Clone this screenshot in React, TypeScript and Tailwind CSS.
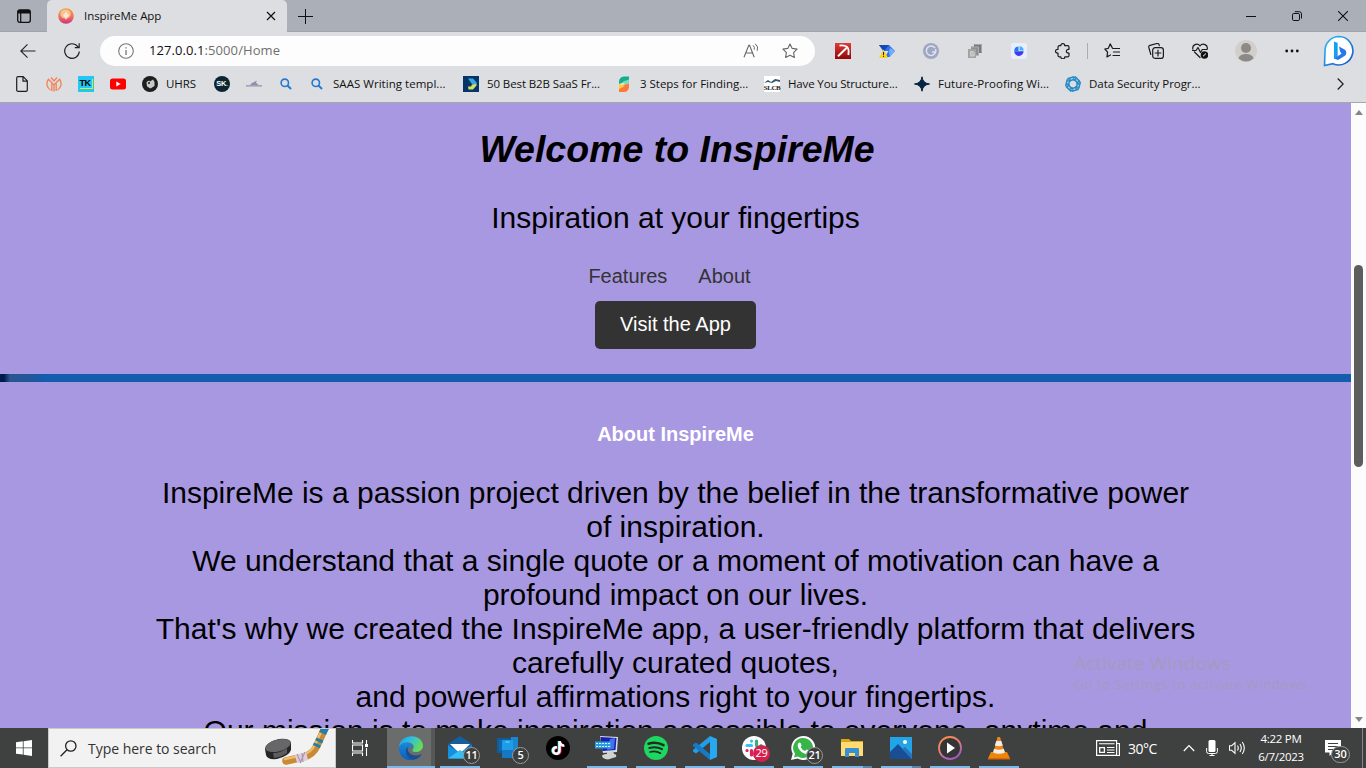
import React from "react";
import { FaTiktok } from "react-icons/fa6";

const UI = "font-['Open_Sans','Noto_Sans',sans-serif]";

function Svg({ w = 16, h, box, children }: { w?: number; h?: number; box?: string; children: React.ReactNode }) {
  const hh = h ?? w;
  return (
    <svg width={w} height={hh} viewBox={box ?? `0 0 ${w} ${hh}`} fill="none" className="block shrink-0">
      {children}
    </svg>
  );
}

const line = { stroke: "#1b1b1b", strokeWidth: 1.2, strokeLinecap: "round" as const, strokeLinejoin: "round" as const };

function TitleBar() {
  return (
    <div className="flex h-8 bg-[#abafb7] shadow-[inset_0_-1px_0_#a0a3ac]">
      <div className="flex w-[47px] items-center justify-center">
        <Svg w={14}>
          <rect x=".7" y=".9" width="12.6" height="12.4" rx="2" stroke="#111" strokeWidth="1.3" />
          <path d="M1 1h12v3.5H1z" fill="#111" />
          <path d="M3.7 4v9" stroke="#111" strokeWidth="1.2" />
        </Svg>
      </div>
      <div className="flex w-60 items-center rounded-t-[5px] bg-[#dddee2] pl-[11px]">
        <Svg>
          <defs>
            <linearGradient id="fav" x1="0" y1="0" x2="0" y2="1">
              <stop offset="0" stopColor="#f3a13a" />
              <stop offset=".5" stopColor="#ef7a55" />
              <stop offset="1" stopColor="#cf2f80" />
            </linearGradient>
          </defs>
          <circle cx="8" cy="8" r="7.8" fill="url(#fav)" />
          <ellipse cx="7.5" cy="6" rx="5.2" ry="4.5" fill="#fbd3b0" opacity=".75" />
          <path d="M8 3.500l1.500 2.500 2 1-2 2-1.500 3-1.500-3-2-2 2-1z" fill="#fff0dc" opacity=".8" />
        </Svg>
        <span className="ml-[10px] w-[172px] text-[11.5px] tracking-[-0.05px] text-[#111]">InspireMe App</span>
        <span className="ml-2.5">
          <Svg w={10}>
            <path d="M1 1l8 8M9 1L1 9" stroke="#111" strokeWidth="1.2" />
          </Svg>
        </span>
      </div>
      <div className="flex w-9 items-center justify-center">
        <Svg w={15}>
          <path d="M7.500 0v15M0 7.500h15" stroke="#111" strokeWidth="1" />
        </Svg>
      </div>
      <div className="ml-auto flex items-center">
        <div className="flex w-[46px] justify-center">
          <Svg w={10}>
            <path d="M0 5.5h10" stroke="#111" />
          </Svg>
        </div>
        <div className="flex w-[46px] justify-center">
          <Svg w={10}>
            <rect x=".5" y="2.5" width="7" height="7" rx="1.3" stroke="#111" />
            <path d="M2.8.7H7.3a2.2 2.2 0 0 1 2.2 2.2v4.6" stroke="#111" />
          </Svg>
        </div>
        <div className="flex w-[46px] justify-center">
          <Svg w={10}>
            <path d="M0 0l10 10M10 0L0 10" stroke="#111" strokeWidth="1.1" />
          </Svg>
        </div>
      </div>
    </div>
  );
}

function Cell({ children }: { children: React.ReactNode }) {
  return <div className="flex w-11 shrink-0 items-center justify-center">{children}</div>;
}

const star = "M8 .9l2.2 4.5 4.9.7-3.5 3.5.8 4.9L8 12.2l-4.400 2.300.8-4.900L.9 6.100l4.900-.7z";

function Toolbar() {
  return (
    <div className="flex h-[38px] items-center">
      <div className="ml-1.5 flex">
        <Cell>
          <Svg>
            <path d="M15.5 8H.8M7.5 1.3L.8 8l6.7 6.7" stroke="#222" strokeWidth="1.1" />
          </Svg>
        </Cell>
        <Cell>
          <Svg>
            <path d="M15.300 8.500A7.300 7.300 0 1 1 13.800 3.600L15 4.700M15.200.3v4.400h-4.400" stroke="#222" strokeWidth="1.2" />
          </Svg>
        </Cell>
      </div>
      <div className="ml-1.5 flex h-[30px] w-[715px] items-center rounded-full bg-[#fdfdfd]">
        <div className="ml-[18px]">
          <Svg>
            <circle cx="8" cy="8" r="7.3" stroke="#777" strokeWidth="1.1" />
            <path d="M8 7v5M8 4.2v1.4" stroke="#777" strokeWidth="1.3" />
          </Svg>
        </div>
        <span className="ml-[15px] text-[13px] tracking-[0.08px] text-[#6f6f6f]">
          <span className="text-[#111]">127.0.0.1</span>:5000/Home
        </span>
        <div className="ml-auto flex items-center gap-[23px] pr-[17px]">
          <Svg>
            <path d="M1 14.2L5.8 2.2h.8l4.6 12M2.8 10h6.600" stroke="#666" strokeWidth="1.1" />
            <path d="M10 2.400q2 1.600 1.200 4.200M12.200.8q3.600 2.800 2 7" stroke="#666" />
          </Svg>
          <Svg>
            <path d={star} stroke="#666" strokeWidth="1.1" strokeLinejoin="round" />
          </Svg>
        </div>
      </div>
      <div className="ml-1.5 flex">
        <Cell>
          <Svg>
            <defs>
              <linearGradient id="red" x1="0" y1="0" x2="0" y2="1">
                <stop stopColor="#e03a38" />
                <stop offset="1" stopColor="#900707" />
              </linearGradient>
            </defs>
            <path d="M0 0h16v16H0z" fill="url(#red)" />
            <path d="M3 13.300L11.500 5" stroke="#fff" strokeWidth="1.900" />
            <path d="M4.500 2.600Q9.500 2 12 4t1.300 8" stroke="#fff" strokeWidth="1.800" />
          </Svg>
        </Cell>
        <Cell>
          <Svg>
            <path d="M0 2h10l6 6-5.500 6H6l3.500-6H4z" fill="#2c73ee" />
            <path d="M0 2h10L5 8z" fill="#1349b0" />
            <path d="M11 5l5 3-5 5.500-1-5z" fill="#79adf5" />
            <path d="M4.500 6.500L9 15H0z" fill="#ffd21c" />
            <path d="M4.500 9v3M4.500 12.800v1.200" stroke="#222" />
          </Svg>
        </Cell>
        <Cell>
          <Svg>
            <circle cx="8" cy="8" r="8" fill="#9ea6c2" />
            <path d="M12 5.200A4.700 4.700 0 1 0 12.600 9H9M12.700 6v3" stroke="#e1e3ec" strokeWidth="1.500" />
          </Svg>
        </Cell>
        <Cell>
          <Svg w={14}>
            <path d="M6 0h8v9H6z" fill="#7b7b7b" />
            <path d="M3 2.500h8v9H3z" fill="#8f8f8f" />
            <path d="M0 5h8v9H0z" fill="#a3a3a3" />
            <path d="M2.500 7.500h2.700l1 1v3.500H2.500z" fill="#bdbdbd" stroke="#cfcfcf" />
            <path d="M3 3h7.500v8M6.500.5h7v8" stroke="#b9b9b9" strokeWidth=".7" />
          </Svg>
        </Cell>
        <Cell>
          <Svg>
            <rect width="16" height="16" rx="3" fill="#e8eefa" />
            <path d="M7.500 8V3.500A4.600 4.600 0 0 0 3.200 8z" fill="#1f7cf7" />
            <path d="M3.200 8.200h9.400a4.700 4.700 0 0 1-9.400 0z" fill="#3d3bec" />
            <path d="M8.500 3.300A4.400 4.400 0 0 1 12.700 7.500H8.500z" fill="#45b2ff" />
          </Svg>
        </Cell>
        <Cell>
          <Svg>
            <path
              d="M5.800 2.700a2 2 0 0 1 4 0h2.700q1.500 0 1.500 1.500v2.100h-.7a1.900 1.900 0 1 0 0 3.800h.7v2.300q0 1.500-1.500 1.500H9.800a2 2 0 0 1-4 0H4.500Q3 13.900 3 12.400v-2.300h-.6a1.900 1.900 0 1 1 0-3.800H3V4.200q0-1.500 1.500-1.500z"
              {...line}
            />
          </Svg>
        </Cell>
      </div>
      <div className="ml-[2px] h-4 w-px bg-[#aaacb2]" />
      <div className="ml-0.5 flex">
        <Cell>
          <Svg>
            <path d="M8.500 5.200L6.200.9 4.300 5.300.8 6l2.800 3.200-.7 4.700L6.500 12M9 5.500h6.500M9.500 9h6M9 12.500h6.500" {...line} />
          </Svg>
        </Cell>
        <Cell>
          <Svg>
            <rect x="4.700" y="4.700" width="10.700" height="10.700" rx="2.500" {...line} />
            <path d="M10 7.200v5.700M7.200 10h5.700" {...line} />
            <path d="M2.800 11.500L.8 4.500q-.4-1.700 1.200-2.200l7-1.800q1.400-.3 2 1.100l.3 1" {...line} />
          </Svg>
        </Cell>
        <Cell>
          <Svg>
            <path d="M.9 6.200C-.2 2.200 5-.8 8 2.800 11-.8 16.200 2.200 15.200 6.200M2.500 9L8 14.500M.2 7.500H4l2-3 2.500 5 1.800-3H15" {...line} />
            <circle cx="12.500" cy="12" r="3.800" fill="#111" />
            <path d="M11 13.300l3-2.800" stroke="#fff" />
          </Svg>
        </Cell>
        <div className="flex w-12 items-center justify-center">
          <Svg w={22}>
            <circle cx="11" cy="11" r="11" fill="#d2cfcb" />
            <circle cx="11" cy="8" r="5" fill="#8c8986" />
            <path d="M3.500 18.500q1-4.500 7.500-4.500t7.500 4.500A11 11 0 0 1 3.500 18.500z" fill="#8c8986" />
          </Svg>
        </div>
        <Cell>
          <Svg w={14}>
            <circle cx="1.700" cy="7" r="1.400" fill="#111" />
            <circle cx="7" cy="7" r="1.400" fill="#111" />
            <circle cx="12.300" cy="7" r="1.400" fill="#111" />
          </Svg>
        </Cell>
      </div>
      <div className="ml-[9px]">
        <Svg w={32}>
          <defs>
            <linearGradient id="bing" x1="0" y1="0" x2="1" y2="1">
              <stop stopColor="#28c2f4" />
              <stop offset="1" stopColor="#174fcb" />
            </linearGradient>
          </defs>
          <path d="M16 1.500a14.200 14.200 0 1 1-6 27.200L1.500 30.500 2 16A14.200 14.200 0 0 1 16 1.500z" fill="#fff" stroke="url(#bing)" strokeWidth="1.600" />
          <path d="M11 6.500l3.700 1.500v13.500L11 24z" fill="#159ff2" />
          <path d="M16 11.500l6 3.200q2.500 2.300.3 5.800L15 25l-4-1.500 7.500-4.700-1.500-2.500z" fill="#2877ef" />
        </Svg>
      </div>
    </div>
  );
}

function Mark({ icon, label, gap }: { icon: React.ReactNode; label?: string; gap?: string }) {
  return (
    <div className="flex h-4 shrink-0 items-center">
      <div className="flex w-4 justify-center">{icon}</div>
      {label && <span className={`ml-2 text-[11.5px] whitespace-nowrap ${gap ?? ""}`}>{label}</span>}
    </div>
  );
}

const Search = () => (
  <Svg w={12}>
    <circle cx="4.800" cy="4.800" r="3.700" stroke="#2578cf" strokeWidth="1.600" />
    <path d="M7.500 7.500L11 11" stroke="#2578cf" strokeWidth="2" />
  </Svg>
);

function Bookmarks() {
  return (
    <div className="flex h-7 items-center text-[#111]">
      <div className="ml-3.5 flex items-center gap-4">
        <Mark
          icon={
            <Svg w={12} h={16}>
              <path d="M.7 2.200Q.7.700 2.200.7h5l4.100 4.200v9q0 1.400-1.400 1.400H2.100Q.7 15.300.7 13.900zM7 .7v4.500h4.300" {...line} />
            </Svg>
          }
        />
        <Mark
          icon={
            <Svg>
              <path d="M4.500 14A7.300 7.300 0 0 1 2.500 3.200L8 9l5.500-5.800A7.300 7.300 0 0 1 11.500 14M8 9v6.500M5.800 7.500V15M10.200 7.500V15M5 1.500L8 5l3-3.500" stroke="#f2865a" strokeWidth="1.400" />
            </Svg>
          }
        />
        <Mark
          icon={
            <div className="flex h-4 w-4 items-center justify-center bg-[#22c8f4]">
              <span className="h-[10px] w-[13px] border-r border-b border-[#d8ec2b] font-['Liberation_Sans',sans-serif] text-[9px] leading-[9px] font-bold tracking-[-0.5px] text-black">TK</span>
            </div>
          }
        />
        <Mark
          icon={
            <Svg w={16} h={12}>
              <rect y=".5" width="16" height="11" rx="2.500" fill="#f00" />
              <path d="M6.300 3.500v5L10.700 6z" fill="#fff" />
            </Svg>
          }
        />
        <Mark
          label="UHRS"
          gap="w-[31px] tracking-[-0.1px]"
          icon={
            <Svg>
              <circle cx="8" cy="8" r="8" fill="#1e1e1e" />
              <path d="M4.500 6L7 4.500l1 1L11 3.500l1.500 2.500v4L8.500 12.500 5 10.500z" fill="#c8c8c8" />
              <path d="M6 6h2v2H6z" fill="#444" />
            </Svg>
          }
        />
      </div>
      <div className="ml-[17px] flex items-center gap-4">
        <Mark
          icon={
            <div className="flex h-4 w-4 items-center justify-center rounded-full bg-[#0b2533] font-['Liberation_Sans',sans-serif] text-[7.500px] leading-4 font-bold tracking-[-0.3px] text-white">
              SK<span className="text-[#27e06c]">.</span>
            </div>
          }
        />
        <Mark
          icon={
            <Svg>
              <path d="M0 10.500h16v-1.200H0zM4 9l2-2 5-2.500L10 6.500l2.500 2.500z" fill="#8f90ac" />
            </Svg>
          }
        />
        <Mark icon={<Search />} />
      </div>
      <div className="ml-[15px] flex items-center gap-4">
        <Mark icon={<Search />} label="SAAS Writing templ..." gap="w-[114px] tracking-[0.03px]" />
        <Mark
          label="50 Best B2B SaaS Fr..."
          gap="w-[113px] tracking-[-0.1px]"
          icon={
            <Svg>
              <path d="M0 0h16v16H0z" fill="#053568" />
              <path d="M5 2.500h5l4 4.500-1.500 2.500L9 8 7.500 6z" fill="#39a7e7" />
              <path d="M9 8.500l4.500-.5v1.500L10 13.500H5.500l-.5-3h3z" fill="#d4df62" />
            </Svg>
          }
        />
        <Mark
          label="3 Steps for Finding..."
          gap="w-[108px] tracking-[-0.02px]"
          icon={
            <Svg>
              <path d="M3 6q0-5 5-5.500h5V4L3 8z" fill="#13ad8c" />
              <path d="M7 5.500l6-2v3.500L9 9z" fill="#75ddc0" />
              <path d="M3 10.500l10-3v4q-1 4.500-5 4.500H3z" fill="#ff773a" />
              <path d="M3 8l6 2-6 3z" fill="#ffd32b" />
            </Svg>
          }
        />
        <Mark
          label="Have You Structure..."
          gap="w-[110px] tracking-[-0.14px]"
          icon={
            <div className="flex h-4 w-4 flex-col items-center justify-end bg-white">
              <Svg w={16} h={7}>
                <path d="M0 6l4-3 3 2 4-3 5 1v2l-4-1-4 2-4-1z" fill="#31566d" />
              </Svg>
              <span className="font-['Liberation_Serif',serif] text-[7px] leading-[8px] font-bold tracking-[-0.4px] text-[#222]">SLCB</span>
            </div>
          }
        />
        <Mark
          label="Future-Proofing Wi..."
          gap="w-[111px] tracking-[0.05px]"
          icon={
            <Svg>
              <path d="M8 .8Q8.800 7.200 15.500 8 8.800 8.800 8 15.200 7.200 8.800.5 8 7.200 7.200 8 .8z" fill="#062443" stroke="#062443" />
            </Svg>
          }
        />
        <Mark
          label="Data Security Progr..."
          gap="w-[112px] tracking-[-0.05px]"
          icon={
            <Svg>
              {[0, 60, 120, 180, 240, 300].map((a) => (
                <path key={a} transform={`rotate(${a} 8 8)`} d="M3 5.500V2.500L9 .8M5.300 5.800V4.500l6.200-1.800" stroke="#2489c4" strokeWidth="1.500" />
              ))}
            </Svg>
          }
        />
      </div>
      <div className="mr-[22px] ml-auto">
        <Svg w={7} h={12}>
          <path d="M.7.500L6.200 6 .7 11.500" stroke="#222" strokeWidth="1.300" />
        </Svg>
      </div>
    </div>
  );
}

const paragraph = [
  "InspireMe is a passion project driven by the belief in the transformative power",
  "of inspiration.",
  "We understand that a single quote or a moment of motivation can have a",
  "profound impact on our lives.",
  "That's why we created the InspireMe app, a user-friendly platform that delivers",
  "carefully curated quotes,",
  "and powerful affirmations right to your fingertips.",
  "Our mission is to make inspiration accessible to everyone, anytime and",
];

function Page() {
  return (
    <div className="relative flex h-[625px] overflow-hidden bg-[#a898e2]">
      <main className="flex w-[1351px] flex-col items-center font-['Liberation_Sans',Arial,sans-serif] text-black">
        <h1 className="mt-[24px] shrink-0 pl-[3px] text-[37.500px] leading-[44px] font-bold whitespace-nowrap italic">Welcome to InspireMe</h1>
        <p className="mt-[30px] shrink-0 text-[30px] leading-[34px]">Inspiration at your fingertips</p>
        <nav className="mt-[30px] mr-[12px] flex shrink-0 gap-[31px] text-[20px] leading-[23px] text-[#333]">
          <a>Features</a>
          <a>About</a>
        </nav>
        <a className="mt-[13px] flex h-12 w-[161px] shrink-0 justify-center rounded-[5px] bg-[#333] pt-3 text-[20px] leading-[23px] text-white">Visit the App</a>
        <div className="mt-[25px] h-2 w-full shrink-0 bg-linear-[90deg,#001b50_0px,#001b50_4px,#2b568f_10px,#20579b_32px,#135cae_45px,#135cae_100%]" />
        <h2 className="mt-[41px] shrink-0 text-[20px] leading-[23px] font-bold text-white">About InspireMe</h2>
        <div className="mt-[30px] shrink-0 text-center text-[30px] leading-[34px] whitespace-nowrap">
          {paragraph.map((t) => (
            <p key={t}>{t}</p>
          ))}
        </div>
      </main>
      <aside className="flex w-[15px] flex-col items-center bg-[#fcfcfc]">
        <div className="mt-[7px]">
          <Svg w={8} h={5}>
            <path d="M0 5l4-5 4 5z" fill="#858585" />
          </Svg>
        </div>
        <div className="mt-[150px] h-[202px] w-[9px] rounded-full bg-[#5d5d5d]" />
        <div className="mt-auto mb-[6px]">
          <Svg w={8} h={5}>
            <path d="M0 0l4 5 4-5z" fill="#858585" />
          </Svg>
        </div>
      </aside>
      <div className={`absolute top-[548px] left-[1074px] whitespace-nowrap text-[#a29bc0] ${UI}`}>
        <p className="text-[19px] leading-[24px] tracking-[0.05px]">Activate Windows</p>
        <p className="text-[13.500px] leading-[19px] tracking-[0.45px]">Go to Settings to activate Windows.</p>
      </div>
    </div>
  );
}

function Badge({ children, pink }: { children: React.ReactNode; pink?: boolean }) {
  return (
    <span
      className={`absolute top-[19px] left-[28px] flex h-[17px] w-[17px] items-center justify-center rounded-full text-[11px] tracking-[-0.3px] text-white ${
        pink ? "-mt-0.5 -ml-1 h-[15px] w-[15px] bg-[#d3204f] text-[10px]" : "border border-[#999] bg-[#3d3f3f] font-semibold"
      }`}
    >
      {children}
    </span>
  );
}

function Task({ children, bar, stacked }: { children: React.ReactNode; bar?: boolean; stacked?: boolean }) {
  return (
    <div className="relative flex h-10 w-[49px] shrink-0 flex-col items-center">
      <div className="flex h-[38px] items-center pt-0.5">{children}</div>
      {bar && (
        <div className="flex h-0.5 w-10 bg-[#76b9ed]">
          {stacked && <div className="ml-auto w-[9px] bg-[#5685ad]" />}
        </div>
      )}
    </div>
  );
}

function Taskbar() {
  return (
    <footer className="flex h-10 bg-[#3f4141] text-white">
      <div className="flex w-12 items-center justify-center">
        <Svg>
          <path d="M0 2.300L6.800 1.300v6.200H0zM7.600 1.200L16 0v7.500H7.600zM0 8.300h6.800v6.300L0 13.700zM7.600 8.300H16V16l-8.400-1.200z" fill="#fff" />
        </Svg>
      </div>
      <div className="flex w-72 items-center border border-[#c9c9c9] bg-[#f2f2f2] pl-[11px]">
        <Svg w={17}>
          <circle cx="10.800" cy="6" r="5.200" stroke="#222" strokeWidth="1.300" />
          <path d="M7 9.800L.6 16.300" stroke="#222" strokeWidth="1.300" />
        </Svg>
        <span className="ml-[11px] text-[14px] tracking-[-0.03px] whitespace-nowrap text-[#333]">Type here to search</span>
        <div className="mr-[6px] ml-auto">
          <Svg w={65} h={38}>
            <path d="M1 20Q2 13 15 10q11-1 12 4v7q-2 6-14 9-10 1-11-4z" fill="#252525" />
            <ellipse cx="14" cy="16.500" rx="13" ry="5.800" transform="rotate(-14 14 16.500)" fill="#67676a" />
            <path d="M9 24q8 0 14-5v5q-5 4-13 5z" fill="#5c5c5e" />
            <path d="M61.500-2L53 16.500Q49 26 38 28.500L22 32" stroke="#c98a36" strokeWidth="7.500" strokeLinecap="round" />
            <path d="M59.500-2L51 15.500Q47 24 37 26.500L21 30" stroke="#eebc68" strokeWidth="2.500" strokeLinecap="round" />
            <path d="M43 27L32 30" stroke="#dfcddd" strokeWidth="8.500" />
            <path d="M33 25l4 9M38 24l1 9M41 23l-5 11" stroke="#a795ab" strokeWidth="1.100" />
            <path d="M63-5L58.500 4.500" stroke="#2680a6" strokeWidth="7.500" />
            <path d="M56 10l-1.300 2.800M53.500 15l-1.200 2.600" stroke="#247fa6" strokeWidth="7.500" />
          </Svg>
        </div>
      </div>
      <div className="flex w-[50px] items-center justify-center pr-0.5">
        <Svg w={17} h={16}>
          <path d="M.5 0v3h10V0M.5 16v-3h10v3M.5 5h10v6H.5zM14.500 0v4M14.500 8v8" stroke="#fff" strokeWidth="1.100" />
          <path d="M13 4h3v3h-3z" fill="#fff" />
        </Svg>
      </div>
      <div className="flex">
        <div className="flex h-10 w-[49px] flex-col border-l border-[#3f4141] bg-[#6b6d6d]">
          <div className="flex h-[38px] items-center border-r-4 border-[#565858] pt-0.5 pl-[12px]">
            <Svg w={24}>
              <defs>
                <linearGradient id="e1" x1="0" y1="0" x2="1" y2=".4">
                  <stop stopColor="#269ae0" />
                  <stop offset=".5" stopColor="#30bfe0" />
                  <stop offset="1" stopColor="#65dc58" />
                </linearGradient>
                <linearGradient id="e2" x1="0" y1="0" x2="0" y2="1">
                  <stop stopColor="#178bd8" />
                  <stop offset="1" stopColor="#105db9" />
                </linearGradient>
              </defs>
              <path d="M0 11C1-3 23-3 24 9.500c0 4-3 6.500-7 6.500-3 0-4.500-1-3.500-2.300C17 9 12 6 8 6.500 4 7 1 9 0 11z" fill="url(#e1)" />
              <path d="M0 11C2 7 5 6 8 6.500c3 0 6 2.500 6 5-1-1.500-5-1-5 3 0 5 7 8 13.500 4C15 28-1 25 0 11z" fill="url(#e2)" />
              <path d="M8.500 10.500c-4 5 0 12 5 13 5 0 8-3 9.300-5.300C14 21.500 8 18 8.500 10.500z" fill="#174f91" />
            </Svg>
          </div>
          <div className="h-0.5 bg-[#76b9ed]" />
        </div>
        <Task bar>
          <Svg w={24}>
            <path d="M0 8L12 0l12 8v14H0z" fill="#155f9e" />
            <path d="M2 8h20L12 18z" fill="#fff" />
            <path d="M0 9l12 8L24 9v13.500H0z" fill="#1490df" />
            <path d="M0 22.500L12 14l12 8.500z" fill="#35bdf4" />
          </Svg>
          <Badge>11</Badge>
        </Task>
        <Task>
          <Svg w={24}>
            <path d="M0 2h18v15H0z" fill="#0d5c9f" />
            <path d="M2 4h14v11H2z" fill="#1168ac" />
            <path d="M14 1h7v15h-7z" fill="#1a86cf" />
            <rect x="5" y="4" width="11" height="18" rx="1" fill="#1f9ce6" />
            <path d="M5 14h11v8H5z" fill="#1478c4" />
            <path d="M8.500 6h4" stroke="#85d8ff" />
          </Svg>
          <Badge>5</Badge>
        </Task>
        <Task>
          <div className="relative flex h-6 w-6 items-center justify-center rounded-full bg-black">
            <FaTiktok size={14} className="absolute -translate-x-[0.7px] text-[#25e5df]" />
            <FaTiktok size={14} className="absolute translate-x-[0.7px] translate-y-[0.6px] text-[#fe2958]" />
            <FaTiktok size={14} className="absolute text-white" />
          </div>
        </Task>
        <Task bar>
          <Svg w={24}>
            <path d="M5 0l18 1-1 15-14 1z" fill="#d5dce2" />
            <path d="M5.500 1l16 1-1 12-13 1z" fill="#1720b3" />
            <path d="M15 3l5-1-1 11-7 1z" fill="#4270ef" />
            <path d="M0 5.500h16v7H0z" fill="#2b9bdf" />
            <path d="M1 7.500h14M1 10.500h14" stroke="#d4f3ff" strokeDasharray="2 1" />
            <path d="M12 16l6-1 1 3q3 0 2 3l-8 2.500q-6-.5-6-4 2-2 5-1.500z" fill="#d2d2cf" />
          </Svg>
        </Task>
        <Task bar>
          <Svg w={24}>
            <circle cx="12" cy="12" r="12" fill="#1ed760" />
            <path d="M4.500 7.700q8-2.300 15 1.500" stroke="#202b24" strokeWidth="2.500" strokeLinecap="round" />
            <path d="M5.300 12q7-2 12.700 1.200" stroke="#202b24" strokeWidth="2" strokeLinecap="round" />
            <path d="M6 16q5.500-1.500 10.500 1.200" stroke="#202b24" strokeWidth="1.700" strokeLinecap="round" />
          </Svg>
        </Task>
        <Task bar>
          <Svg w={24}>
            <path d="M17 0l7 3v18l-7 3z" fill="#29a8f2" />
            <path d="M17 0v6L3 17.500 0 15.500v-1.500z" fill="#249ce8" />
            <path d="M17 24v-6L3 6.500 0 8.500V10z" fill="#147cc6" />
          </Svg>
        </Task>
        <Task bar>
          <Svg w={24}>
            <circle cx="12" cy="12" r="12" fill="#fff" />
            <g strokeWidth="3.200" strokeLinecap="round">
              <path d="M9.500 5v.1M5 9.500h4.500" stroke="#36c5f0" />
              <path d="M14.500 5v4.500M19 9.500v.1" stroke="#2eb67d" />
              <path d="M5 14.500h.1M9.500 14.500v4.500" stroke="#e01e5a" />
              <path d="M14.500 14.500H19M14.500 19v.1" stroke="#ecb22e" />
            </g>
          </Svg>
          <Badge pink>29</Badge>
        </Task>
        <Task bar>
          <Svg w={24}>
            <path d="M12 0a12 12 0 1 1-5.500 22.500L0 24l1.700-6.300A12 12 0 0 1 12 0z" fill="#fff" />
            <path d="M12 2a10 10 0 1 1-5.200 18.500L3 21.500l1-3.700A10 10 0 0 1 12 2z" fill="#38b449" />
            <path d="M8.300 6.500c-5 3 3 13 8.800 11 2-1 1.500-2.500 1-3l-2.500-1-1.500 1.500q-3-1-4.500-4l1-1.300-1-2.700z" fill="#fff" />
          </Svg>
          <Badge>21</Badge>
        </Task>
        <Task bar stacked>
          <Svg w={22} h={20}>
            <path d="M0 1h8l2 2h12v15H0z" fill="#dda516" />
            <path d="M0 4h22v14H0z" fill="#ffdb70" />
            <path d="M4 19v-8q0-1 1-1h12q1 0 1 1v8h-4v-4H8v4z" fill="#388fd4" />
          </Svg>
        </Task>
        <Task bar stacked>
          <Svg w={22}>
            <path d="M0 0h22v22H0z" fill="#22a5e8" />
            <path d="M0 15L8 7l14 15H0z" fill="#174e94" />
            <path d="M12 12l3-2 7 7v5z" fill="#2b72bb" />
            <circle cx="15" cy="5" r="2" fill="#fff" />
          </Svg>
        </Task>
        <Task bar>
          <Svg w={24}>
            <defs>
              <linearGradient id="media" x1="0" y1="0" x2=".5" y2="1">
                <stop stopColor="#ff913b" />
                <stop offset=".5" stopColor="#e78179" />
                <stop offset="1" stopColor="#a75cc0" />
              </linearGradient>
            </defs>
            <circle cx="12" cy="12" r="11" fill="#343535" stroke="url(#media)" strokeWidth="1.800" />
            <path d="M9 6.500v11l8-5.500z" fill="#fff" />
          </Svg>
        </Task>
        <Task bar>
          <Svg w={22} h={24}>
            <path d="M3 16h16l3 6.500H0z" fill="#ef8508" />
            <path d="M9.500 1h2.500l5 17q-6 3.500-12 0z" fill="#f58512" />
            <path d="M8.300 5h5l1.500 4.500q-4 1.500-8 0zM6 12.800q5 2 9.800 0l1.200 3.700q-6 2.500-12 0z" fill="#eee" />
            <path d="M0 22h22v1.500H0z" fill="#d56907" />
          </Svg>
        </Task>
      </div>
      <div className="ml-auto flex items-center">
        <Svg w={24} h={16}>
          <path d="M.6.600h20v14.800H.6zM21 3.500h2.400v12H20" stroke="#fff" strokeWidth="1.200" />
          <path d="M3 3.800h15.500M11 7.500h7.500M11 10h7.500M11 12.500h7.500" stroke="#fff" strokeWidth="1.100" />
          <path d="M3.700 7.600h4.700v4.700H3.700z" stroke="#fff" strokeWidth="1.300" />
        </Svg>
        <span className="ml-2 w-[55px] text-[14px] tracking-[-0.5px]">30°C</span>
        <Svg w={12} h={8}>
          <path d="M.8 7L6 1.500 11.200 7" stroke="#fff" strokeWidth="1.200" />
        </Svg>
        <div className="ml-[11px]">
          <Svg w={12} h={16}>
            <rect x="2.500" width="7" height="12" rx="1.500" fill="#fff" />
            <path d="M.6 8v3.500q0 2 2 2h6.800q2 0 2-2V8M6 13.500v2M3.500 15.500h5" stroke="#fff" />
          </Svg>
        </div>
        <div className="ml-[11px]">
          <Svg w={17} h={14}>
            <path d="M.5 4.700h2.200L6 1.700v10.600l-3.300-3H.5zM8.500 4.500q1.500 2.500 0 5M11 3q2.500 4 0 8M13.300 1q4 6 0 12" stroke="#fff" strokeWidth="1.100" />
          </Svg>
        </div>
        <div className="ml-[8px] flex w-[54px] flex-col items-center text-[11.500px] leading-[18px] tracking-[-0.3px] whitespace-nowrap">
          <span>4:22 PM</span>
          <span>6/7/2023</span>
        </div>
        <div className="relative ml-[17px] flex h-10 w-[37px] pt-3">
          <Svg w={16}>
            <path d="M0 0h16v12.500H8L4.500 16v-3.500H0z" fill="#fff" />
            <path d="M3 3.500h10M3 6.500h10M3 9.500h7" stroke="#3f4141" />
          </Svg>
          <span className="absolute top-[18px] left-[6px] flex h-[17px] w-[19px] items-center justify-center rounded-full border border-[#999] bg-[#3f4141] text-[11px] font-semibold">30</span>
        </div>
        <div className="mr-[3px] h-10 w-px bg-[#858585]" />
      </div>
    </footer>
  );
}

export default function App() {
  return (
    <div className={`flex h-[768px] w-[1366px] flex-col overflow-hidden ${UI}`}>
      <header className="flex h-[103px] flex-col border-b border-[#a6a6ad] bg-[#dddee2]">
        <TitleBar />
        <Toolbar />
        <Bookmarks />
      </header>
      <Page />
      <Taskbar />
    </div>
  );
}
